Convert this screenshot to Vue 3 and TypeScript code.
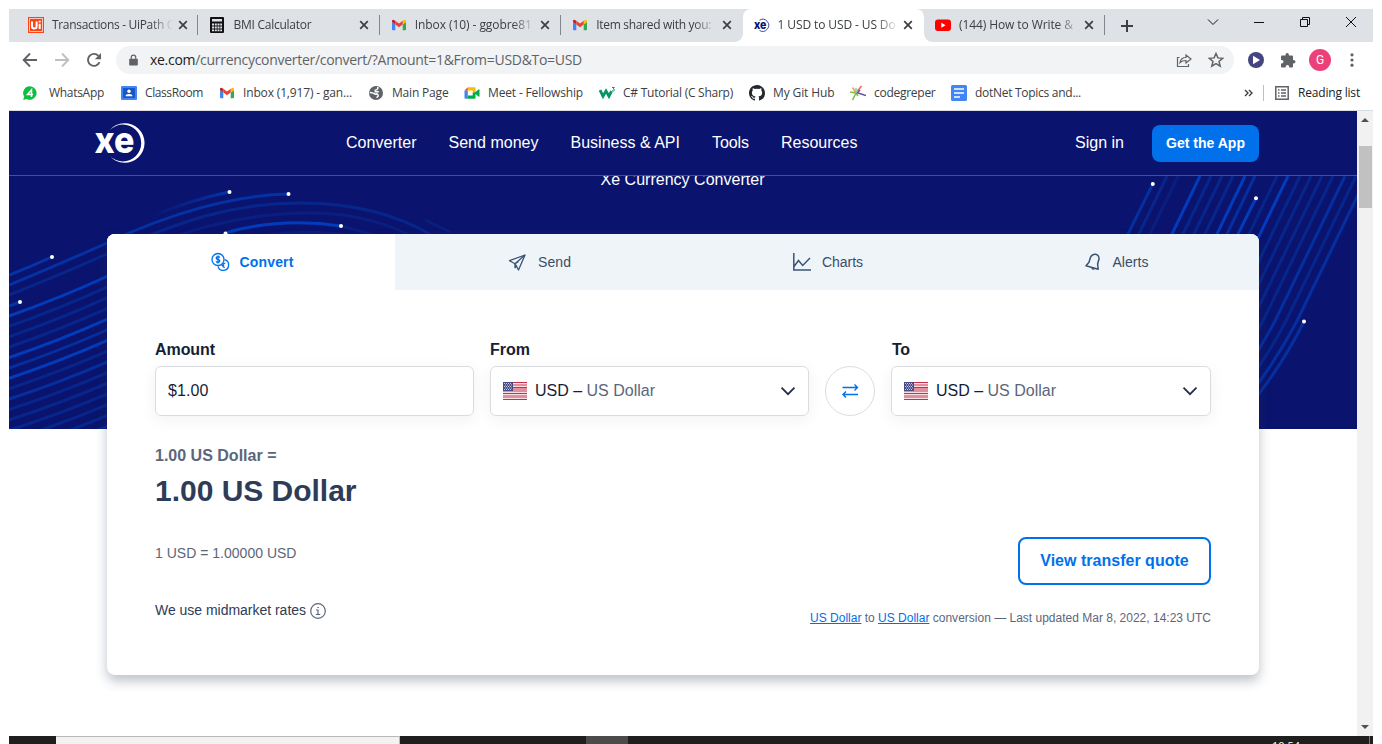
<script setup lang="ts">
import type { Directive } from 'vue'

/* Tracks a label so that it fills the given width. */
const vFit: Directive<HTMLElement, number> = {
  mounted(el, binding) {
    const count = (el.textContent ?? '').trim().length
    const natural = el.getBoundingClientRect().width
    el.style.letterSpacing = `${(binding.value - natural) / count}px`
  },
}

interface Tab { icon: string; title: string; width: number; active?: boolean; sep?: boolean }
const tabs: Tab[] = [
  { icon: 'uipath', title: 'Transactions - UiPath C', width: 122, sep: true },
  { icon: 'calc', title: 'BMI Calculator', width: 78, sep: true },
  { icon: 'gmail', title: 'Inbox (10) - ggobre81', width: 117, sep: true },
  { icon: 'gmail', title: 'Item shared with you:', width: 115 },
  { icon: 'xe', title: '1 USD to USD - US Do', width: 118, active: true },
  { icon: 'youtube', title: '(144) How to Write &', width: 114, sep: true },
]

const bookmarks = [
  { icon: 'whatsapp', title: 'WhatsApp', width: 55 },
  { icon: 'classroom', title: 'ClassRoom', width: 58 },
  { icon: 'gmail', title: 'Inbox (1,917) - gan...', width: 109 },
  { icon: 'globe', title: 'Main Page', width: 56.5 },
  { icon: 'meet', title: 'Meet - Fellowship', width: 95 },
  { icon: 'w3', title: 'C# Tutorial (C Sharp)', width: 110 },
  { icon: 'github', title: 'My Git Hub', width: 61.5 },
  { icon: 'grepper', title: 'codegreper', width: 61.5 },
  { icon: 'docs', title: 'dotNet Topics and...', width: 106 },
]

const nav = [
  { label: 'Converter', width: 70.5 },
  { label: 'Send money', width: 90 },
  { label: 'Business & API', width: 109.5 },
  { label: 'Tools', width: 37 },
  { label: 'Resources', width: 76.5 },
]

const modes = [
  { id: 'convert', label: 'Convert', width: 54 },
  { id: 'send', label: 'Send', width: 33 },
  { id: 'charts', label: 'Charts', width: 41 },
  { id: 'alerts', label: 'Alerts', width: 36 },
]

/* Stroke tones of the hero curves, from faint to bright. */
const tone = ['#0a1e80', '#07268c', '#052f9f', '#023cba']

const leftTones = [3, 1, 1, 1, 3, 2, 3, 1, 2, 1, 1, 1, 1, 1, 1]
const leftLines = leftTones.map((t, i) => {
  const a = 316 + i * 10.4
  const b = 276 + i * 10.7
  return { d: `M9 ${a} Q60 ${(a + b) / 2 + 2} 108 ${b}`, color: tone[t] }
})

const rightLines = [
  [1167, 1], [1178, 0], [1200, 3], [1211, 1], [1222, 1], [1233, 1], [1245, 3], [1255, 2],
  [1277, 1], [1288, 3], [1300, 1], [1311, 1], [1322, 1], [1333, 1], [1345, 2], [1356, 1], [1367, 2],
].map(([x, t]) => ({ d: `M${x} 176 L${x - 70} 321 Q${x - 100} 378 ${x - 145} 429`, color: tone[t] }))

const dots = [
  [229.5, 192], [288.5, 194], [341, 226], [225.5, 233.5], [52, 257], [20, 302],
  [1152.8, 184], [1256, 198.3], [1304, 321.5],
]
</script>

<template>
  <div class="screen">
    <svg class="defs" width="0" height="0">
      <symbol id="i-uipath" viewBox="0 0 16 16"><path fill="#fa4616" d="M0 0h16v16H0z" /><path fill="none" stroke="#fff" stroke-width=".7" d="M1.5 1.5h13v13h-13z" /><path fill="none" stroke="#fff" stroke-width="2" d="M4 4.5v4.8q0 2.2 2.3 2.2t2.3-2.2V4.5M11.7 6.8v5.2M11.7 3.8v1.7" /></symbol>
      <symbol id="i-calc" viewBox="0 0 16 16"><path fill="#111" d="M2 0h12q1 0 1 1v14q0 1-1 1H2q-1 0-1-1V1q0-1 1-1z" /><path fill="#dee1e6" d="M3 2h10v2.5H3zM3 6.5h2v2H3zM5.8 6.5h2v2h-2zM8.5 6.5h2v2h-2zM11.2 6.5h1.8v2h-1.8zM3 9.5h2v2H3zM5.8 9.5h2v2h-2zM8.5 9.5h2v2h-2zM11.2 9.5h1.8v2h-1.8zM3 12.5h2v1.7H3zM5.8 12.5h2v1.7h-2zM8.5 12.5h2v1.7h-2zM11.2 12.5h1.8v1.7h-1.8z" /></symbol>
      <symbol id="i-gmail" viewBox="0 0 16 16"><path fill="#4285f4" d="M1 5l3.3 2.4V13.300H2q-1 0-1-1z" /><path fill="#34a853" d="M15 5l-3.300 2.400V13.300H14q1 0 1-1z" /><path fill="#fbbc04" d="M11.700 3.700L13.200 2.900q1.800-.5 1.800 1.300V5l-3.300 2.500z" /><path fill="#c5221f" d="M4.300 3.700L2.800 2.900Q1 2.400 1 4.200V5l3.300 2.500z" /><path fill="#ea4335" d="M4.300 3.700L8 6.500l3.700-2.800v3.800L8 10.300 4.300 7.500z" /></symbol>
      <symbol id="i-xe" viewBox="0 0 16 16"><text x="0" y="12" font-family="Inter, sans-serif" font-weight="800" font-size="12" textLength="12.500" lengthAdjust="spacingAndGlyphs" fill="#0a146e">xe</text><path fill="none" stroke="#3c4490" stroke-width="1" d="M5.500 3.200A6 6 0 1 1 5.500 13.400" /></symbol>
      <symbol id="i-youtube" viewBox="0 0 16 16"><rect y="2.500" width="16" height="11.500" rx="3" fill="#f00" /><path fill="#fff" d="M6.300 5.700v5l4.300-2.500z" /></symbol>
      <symbol id="i-whatsapp" viewBox="0 0 16 16"><path fill="#0cbf3e" d="M8 1.300a6.700 6.700 0 1 1-3.300 12.600L1.200 15l1-3.400A6.700 6.700 0 0 1 8 1.300z" /><path fill="none" stroke="#fff" stroke-width="1.500" d="M9.500 12V4.800L5.500 9.500h5.500" /></symbol>
      <symbol id="i-classroom" viewBox="0 0 16 16"><rect y="1" width="16" height="14" rx="1" fill="#4285f4" /><path fill="#1a56c4" d="M2 3h12v10H2z" /><circle cx="8" cy="6.300" r="1.700" fill="#fff" /><path fill="#fff" d="M4.500 11.300q0-2.300 3.500-2.300t3.500 2.300z" /></symbol>
      <symbol id="i-globe" viewBox="0 0 16 16"><circle cx="8" cy="8" r="7" fill="#5f6368" /><path fill="none" stroke="#fff" stroke-width="1.500" d="M1.800 7.500q3 .2 4.200 1 1.700 1 2.500.500t1.500 1-1.500 2.500M9.800 2v1.500Q9 5 7.300 5.200v1.600h3.500" /></symbol>
      <symbol id="i-meet" viewBox="0 0 16 16"><path fill="#4285f4" d="M.5 5.500h3.300v8.300H1.500q-1 0-1-1z" /><path fill="#ea4335" d="M.5 5.500l3.300-3.300v3.300z" /><path fill="#fbbc04" d="M3.800 2.200h6.700q1 0 1 1V7L8.700 8.500v-3H3.800z" /><path fill="#00ac47" d="M3.800 10.600h4.900V8l2.800-1 3-2.500q1-.5 1 .5v6q0 1-1 .5l-3-2.500v3.800q0 1-1 1H3.800z" /></symbol>
      <symbol id="i-w3" viewBox="0 0 16 16"><path fill="none" stroke="#059862" stroke-width="2.800" d="M1 5l3 6.200 3-5.200 3 5.200 2.500-5" /><path fill="none" stroke="#059862" stroke-width="1" d="M13 2.500h2.400l-1.200 1.400q1.500.2 1.200 1.400-.7 1.200-2.400.4" /></symbol>
      <symbol id="i-github" viewBox="0 0 16 16"><path fill="#24292f" d="M8 0C3.580 0 0 3.580 0 8c0 3.540 2.290 6.530 5.470 7.590.4.070.55-.17.55-.38v-1.500c-2.010.37-2.530-.49-2.690-.94-.09-.23-.48-.94-.82-1.130-.28-.15-.68-.52-.01-.53.63-.01 1.080.58 1.230.82.720 1.210 1.870.87 2.330.66.070-.52.280-.87.510-1.070-1.780-.2-3.640-.89-3.640-3.950 0-.87.310-1.590.82-2.150-.08-.2-.36-1.020.08-2.120 0 0 .67-.21 2.200.82a7.400 7.400 0 0 1 4 0c1.530-1.040 2.200-.82 2.200-.82.440 1.100.160 1.920.080 2.120.51.560.820 1.270.820 2.150 0 3.070-1.870 3.750-3.650 3.950.290.250.540.730.540 1.480v2.200c0 .21.150.46.550.38A8 8 0 0 0 16 8c0-4.420-3.580-8-8-8z" /></symbol>
      <symbol id="i-grepper" viewBox="0 0 16 16"><g fill="none" stroke-width="1.600"><path stroke="#7ac143" d="M6 8L0 7M6 8l-3.500 7M6 8l2 3" /><path stroke="#f6a04d" d="M6 8L2.500 2.500" /><path stroke="#f06a5a" d="M7.500 6l4-5" /><path stroke="#6a4fa3" d="M5 7l11 3.500M7 8l3-3" /><path stroke="#8ed0a0" d="M6 8V3" /></g></symbol>
      <symbol id="i-docs" viewBox="0 0 16 16"><rect width="16" height="16" rx="1.500" fill="#4285f4" /><path stroke="#fff" stroke-width="1.700" d="M3 4h10M3 8h10M3 12h6" /></symbol>

      <symbol id="i-convert" viewBox="0 0 20 20"><g fill="none" stroke="#0071eb" stroke-width="1.300"><circle cx="8" cy="7.500" r="6" /><path d="M14.500 7.700a5.400 5.400 0 1 1-6.500 6.600" /><path d="M9.900 5.600Q9.300 4.600 8 4.600 6.200 4.700 6.200 6t1.800 1.500T9.800 9 8 10.400q-1.400 0-2-1M8 3.400v8.200M15.300 11.300q-2.200-.2-2.500 1.700-.1 2.300 2 2.300M11.400 13.300h2.800" /></g></symbol>
      <symbol id="i-send" viewBox="0 0 20 20"><g fill="none" stroke="#3b5275" stroke-width="1.300" stroke-linejoin="round"><path d="M17 3L1.500 8.700l5.500 3L10.500 18z" /><path d="M17 3L7 11.700v4L9 13.500M7.500 11.500l3-2" /></g></symbol>
      <symbol id="i-charts" viewBox="0 0 20 20"><path fill="none" stroke="#3b5275" stroke-width="1.500" d="M1.800 1v17H19M2 14.500l4.500-6 4.200 5L18 6" /></symbol>
      <symbol id="i-alerts" viewBox="0 0 20 20"><g fill="none" stroke="#3b5275" stroke-width="1.500" stroke-linejoin="round"><path d="M3 13.800L6 10.300l1.500-5Q9 1.700 12.700 2.300q3.700.9 3.300 4.700l-1.400 5 .6 5.300z" /><path d="M9 15.800q.4 1.900 2.600.8" /></g></symbol>
      <symbol id="i-flag" viewBox="0 0 24 18"><rect width="24" height="18" rx="1.500" fill="#e58e9b" /><path fill="#c3324a" d="M0 0h24v1H0zM10 5h14v1H10zM0 11h24v1H0zM0 17h24v1H0z" /><path fill="#f8dfe3" d="M10 1h14v1H10zM10 4h14v1H10zM0 10h24v1H0zM0 12h24v1H0zM0 16h24v1H0z" /><path fill="#464a86" d="M0 0h10v9H0z" /><path stroke="#c9cbe0" stroke-width="1" stroke-dasharray="1 1" d="M1 1.500h8M2 3h7M1 4.500h8M2 6h7M1 7.500h8" /></symbol>
    </svg>

    <div class="window">
      <header class="tabstrip">
        <div v-for="(t, i) in tabs" :key="i" class="tab" :class="{ active: t.active, sep: t.sep }">
          <svg class="i16"><use :href="'#i-' + t.icon" /></svg>
          <div class="tab-title"><span v-fit="t.width" class="txt">{{ t.title }}</span></div>
          <svg class="close" viewBox="0 0 10 10"><path d="M1.200 1.200l7.600 7.600M8.800 1.200L1.200 8.800" /></svg>
        </div>
        <svg class="plus" viewBox="0 0 14 14"><path d="M7 1v12M1 7h12" /></svg>
        <div class="controls">
          <svg viewBox="0 0 12 12"><path d="M1 3.500l5 5 5-5" /></svg>
          <svg viewBox="0 0 12 12"><path d="M1 6.500h10" /></svg>
          <svg viewBox="0 0 12 12"><path d="M1.500 3.500h7v7h-7zM3.500 3.500v-2h7v7h-2" /></svg>
          <svg viewBox="0 0 12 12"><path d="M1 1l10 10M11 1L1 11" /></svg>
        </div>
      </header>

      <div class="toolbar">
        <svg class="nav-i" viewBox="0 0 16 16"><path d="M15 8H2M8 1.500L1.700 8 8 14.500" /></svg>
        <svg class="nav-i off" viewBox="0 0 16 16"><path d="M1 8h13M8 1.500L14.300 8 8 14.500" /></svg>
        <svg class="nav-i" viewBox="0 0 16 16"><path d="M13.500 10.200A6 6 0 1 1 12.400 3.800" /><path class="solid" d="M15 1v6.200H8.800z" /></svg>
        <div class="omnibox">
          <svg class="lock" viewBox="0 0 10 14"><path fill="#5f6368" d="M1 5h8q.8 0 .8.8v6q0 .8-.8.8H1q-.8 0-.8-.8v-6Q.2 5 1 5z" /><path fill="none" stroke="#5f6368" stroke-width="1.300" d="M2.500 5.500V3.500q0-2.400 2.500-2.400t2.500 2.400v2" /></svg>
          <span v-fit="432" class="txt url"><b>xe.com</b>/currencyconverter/convert/?Amount=1&amp;From=USD&amp;To=USD</span>
          <svg class="box-i" viewBox="0 0 16 16"><path d="M3.500 5.500h-2v9h11V12M4 10.500q1-5 6-5V3l5 4-5 4V8.500q-4 0-6 2z" /></svg>
          <svg class="box-i star" viewBox="0 0 16 16"><path d="M8 1.500l1.900 4.400 4.800.4-3.700 3.100 1.200 4.700L8 11.600l-4.200 2.500L5 9.400 1.300 6.300l4.800-.4z" /></svg>
        </div>
        <div class="extensions">
          <svg class="i16" viewBox="0 0 16 16"><circle cx="8" cy="8" r="8" fill="#45457f" /><path fill="#fff" d="M5 3.800v8.400L12 8z" /></svg>
          <svg class="i16" viewBox="0 0 16 16"><path fill="#5f6368" d="M1 4.500q0-1 1-1h3.500V3q0-2 1.700-2t1.700 2v.5H12q1 0 1 1V8h.5q2 0 2 1.700t-2 1.800H13v3q0 1-1 1H9.200V15q0-2-1.800-2t-1.800 2v.5H2q-1 0-1-1v-3h.7q1.800 0 1.800-1.700T1.700 8H1z" /></svg>
          <span class="avatar">G</span>
          <svg class="i16" viewBox="0 0 16 16" fill="#5f6368"><circle cx="8" cy="2.800" r="1.600" /><circle cx="8" cy="8" r="1.600" /><circle cx="8" cy="13.200" r="1.600" /></svg>
        </div>
      </div>

      <div class="bookmarks">
        <div v-for="b in bookmarks" :key="b.title" class="bookmark">
          <svg class="i16"><use :href="'#i-' + b.icon" /></svg>
          <span v-fit="b.width" class="txt">{{ b.title }}</span>
        </div>
        <div class="reading">
          <svg class="more" viewBox="0 0 10 8"><path d="M1 1l3 3-3 3M5 1l3 3-3 3" /></svg>
          <i class="bar"></i>
          <svg class="list" viewBox="0 0 14 14"><path d="M.8.800h12.400v12.400H.8zM3 4h1.500M6 4h5M3 7h1.500M6 7h5M3 10h1.500M6 10h5" /></svg>
          <span v-fit="62" class="txt">Reading list</span>
        </div>
      </div>

      <div class="viewport">
        <main class="page">
          <nav class="site-nav">
            <svg class="logo" viewBox="94 122 52 42"><text x="94.500" y="153" font-family="Inter, sans-serif" font-weight="800" font-size="37" textLength="40" lengthAdjust="spacingAndGlyphs" fill="#fff">xe</text><path fill="#fff" d="M110 129.800A19.800 19.800 0 1 1 110 156.200 A18.400 18.400 0 1 0 110 129.800z" /></svg>
            <div class="links"><a v-for="n in nav" :key="n.label"><span v-fit="n.width" class="txt">{{ n.label }}</span></a></div>
            <a class="signin"><span v-fit="49" class="txt">Sign in</span></a>
            <button class="get-app"><span v-fit="79" class="txt">Get the App</span></button>
          </nav>

          <section class="hero">
            <svg class="curves" viewBox="9 176 1348 253">
              <defs>
                <linearGradient id="fade" x1="0" x2="1"><stop offset="0" stop-color="#0a146e" /><stop offset="1" stop-color="#0434a8" /></linearGradient>
              </defs>
              <g fill="none" stroke-width="3">
                <path stroke="url(#fade)" d="M150 217Q190 200 229 192" />
                <path stroke="#0432a4" d="M9 285Q60 264 107 243C170 213 235 195 288 194" />
                <path stroke="#07268c" d="M9 295Q60 275 107 254C180 220 235 203 300 203C350 203 395 213 433 236" />
                <path stroke="#0a1e80" d="M107 265C180 230 240 213 310 213C350 213 380 221 412 236" />
                <path stroke="#023cba" d="M225 233Q280 217 341 226" />
                <path stroke="#0a1e80" d="M341 226L385 238M268 235Q310 229 355 236M425 220L450 232" />
                <path stroke="#0434a8" d="M9 275Q30 267 52 257M9 306L20 302" />
                <path v-for="(l, i) in leftLines" :key="'l' + i" :stroke="l.color" :d="l.d" />
                <path v-for="(l, i) in rightLines" :key="'r' + i" :stroke="l.color" :d="l.d" />
                <path stroke="#052f9f" d="M1152.800 184L1125 240M1304 321.500Q1280 370 1240 418" />
                <path stroke="#023cba" d="M1256 198L1236 238" />
              </g>
              <circle v-for="(d, i) in dots" :key="'d' + i" :cx="d[0]" :cy="d[1]" r="2" fill="#fff" />
            </svg>
            <h1><span v-fit="164" class="txt">Xe Currency Converter</span></h1>
          </section>

          <section class="card">
            <div class="modes">
              <div v-for="m in modes" :key="m.id" class="mode" :class="m.id">
                <svg class="i20"><use :href="'#i-' + m.id" /></svg>
                <span v-fit="m.width" class="txt">{{ m.label }}</span>
              </div>
            </div>
            <div class="body">
              <div class="fields">
                <div class="field">
                  <label><span v-fit="60" class="txt">Amount</span></label>
                  <div class="box"><span v-fit="40.500" class="txt">$1.00</span></div>
                </div>
                <div class="field">
                  <label><span v-fit="40" class="txt">From</span></label>
                  <div class="box">
                    <svg class="flag"><use href="#i-flag" /></svg>
                    <span v-fit="120" class="txt">USD – <em>US Dollar</em></span>
                    <svg class="chev" viewBox="0 0 16 10"><path d="M1.500 1.700l6.500 6.500 6.500-6.500" /></svg>
                  </div>
                </div>
                <button class="swap"><svg viewBox="0 0 18 16"><path d="M1.500 4.500h15M13.500 1.500l3 3-3 3M17 11.500H2M5 8.500l-3 3 3 3" /></svg></button>
                <div class="field">
                  <label><span v-fit="17.500" class="txt">To</span></label>
                  <div class="box">
                    <svg class="flag"><use href="#i-flag" /></svg>
                    <span v-fit="120" class="txt">USD – <em>US Dollar</em></span>
                    <svg class="chev" viewBox="0 0 16 10"><path d="M1.500 1.700l6.500 6.500 6.500-6.500" /></svg>
                  </div>
                </div>
              </div>
              <div class="result">
                <div class="left">
                  <p class="base"><span v-fit="121.500" class="txt">1.00 US Dollar =</span></p>
                  <p class="amount"><span v-fit="201.500" class="txt">1.00 US Dollar</span></p>
                  <p class="unit"><span v-fit="141.500" class="txt">1 USD = 1.00000 USD</span></p>
                  <p class="mid"><span v-fit="151" class="txt">We use midmarket rates</span>
                    <svg class="info" viewBox="0 0 16 16"><circle cx="8" cy="8" r="7.300" /><path d="M6 7h2v4.500M5.800 11.500h4.500M7.300 4.500h1.500" /></svg>
                  </p>
                </div>
                <div class="right">
                  <button class="quote"><span v-fit="148.500" class="txt">View transfer quote</span></button>
                  <p class="updated"><span v-fit="401" class="txt"><a>US Dollar</a> to <a>US Dollar</a> conversion — Last updated Mar 8, 2022, 14:23 UTC</span></p>
                </div>
              </div>
            </div>
          </section>
        </main>
        <aside class="scrollbar">
          <svg viewBox="0 0 8 4"><path d="M0 4l4-4 4 4z" /></svg>
          <i class="thumb"></i>
          <svg viewBox="0 0 8 4"><path d="M0 0l4 4 4-4z" /></svg>
        </aside>
      </div>

      <footer class="taskbar">
        <i class="start"></i><i class="search"></i><i class="gap"></i><i class="running"></i>
        <span class="clock">10:54</span><i class="peek"></i>
      </footer>
    </div>
  </div>
</template>

<style>
html, body { margin: 0; background: #fff; overflow: hidden; }
</style>

<style scoped>
.screen { width: 1382px; height: 744px; overflow: hidden; background: #fff; box-sizing: border-box; padding: 9px 9px 0; font-family: "Liberation Sans", Arial, sans-serif; }
.screen * { box-sizing: border-box; }
.defs { position: absolute; }
.window { width: 1364px; height: 735px; display: flex; flex-direction: column; overflow: hidden; }
.txt { display: inline-block; white-space: nowrap; flex: none; }
.i16 { width: 16px; height: 16px; flex: none; overflow: visible; }
.i20 { width: 20px; height: 20px; flex: none; }
button { padding: 0; font-family: inherit; }

.tabstrip { height: 33px; flex: none; background: #dee1e6; display: flex; align-items: center; padding-left: 8px; font: 12px/31px "Open Sans", sans-serif; color: #3c4043; }
.tab { width: 181.400px; height: 33px; flex: none; display: flex; align-items: center; padding-left: 11px; padding-bottom: 1px; position: relative; }
.tab.sep::after { content: ""; width: 1px; height: 20px; background: #80868b; position: absolute; right: 0; top: 6px; }
.tab.active { background: #fff; border-radius: 8px 8px 0 0; }
.tab.active::before, .tab.active::after { content: ""; position: absolute; bottom: 0; width: 8px; height: 8px; }
.tab.active::before { left: -8px; background: radial-gradient(circle at 0 0, #dee1e6 7.500px, #fff 8px); }
.tab.active::after { right: -8px; background: radial-gradient(circle at 100% 0, #dee1e6 7.500px, #fff 8px); }
.tab-title { width: 121px; height: 32px; margin-left: 8px; overflow: hidden; -webkit-mask-image: linear-gradient(90deg, #000 98px, transparent 121px); mask-image: linear-gradient(90deg, #000 98px, transparent 121px); }
.close { width: 10px; height: 10px; margin-left: 4.500px; fill: none; stroke: #3c4043; stroke-width: 1.700; }
.plus { width: 14px; height: 14px; margin-left: 15px; fill: none; stroke: #3c4043; stroke-width: 2; flex: none; }
.controls { display: flex; gap: 34px; margin-left: auto; padding-right: 16px; height: 26px; align-items: center; align-self: flex-start; }
.controls svg { width: 12px; height: 12px; fill: none; stroke: #111; stroke-width: 1; }

.toolbar { height: 36px; flex: none; display: flex; align-items: center; padding: 0 12px 0 13px; }
.nav-i { width: 16px; height: 16px; margin-right: 16px; fill: none; stroke: #5f6368; stroke-width: 1.900; flex: none; }
.nav-i.off { stroke: #bdc1c6; }
.nav-i .solid { fill: #5f6368; stroke: none; }
.omnibox { width: 1118px; height: 28px; margin-left: -2px; background: #f1f3f4; border-radius: 14px; display: flex; align-items: center; flex: none; padding: 0 10px 0 13px; font: 14px/28px "Open Sans", sans-serif; color: #5f6368; }
.lock { width: 9px; height: 13px; margin-right: 12px; }
.url b { font-weight: 400; color: #202124; }
.box-i { width: 16px; height: 16px; margin-left: auto; fill: none; stroke: #5f6368; stroke-width: 1.200; }
.star { margin-left: 16px; stroke-width: 1.500; }
.extensions { display: flex; align-items: center; margin-left: 14px; gap: 16px; }
.avatar { width: 22px; height: 22px; margin: 0 -3px; border-radius: 50%; background: #ec407a; color: #fff; font: 12px/22px Roboto, sans-serif; text-align: center; }

.bookmarks { height: 33px; flex: none; display: grid; grid-template-columns: 99px 98px 149px 96px 135px 150px 101px 101px 1fr auto; align-items: center; padding: 0 13px 3px 13px; border-bottom: 1px solid #dadce0; font: 12px/28px "Open Sans", sans-serif; color: #3c4043; }
.bookmark { display: flex; align-items: center; gap: 8px; }
.bookmark:first-child { gap: 11px; }
.reading { display: flex; align-items: center; }
.more { width: 10px; height: 8px; margin-right: 9px; fill: none; stroke: #3c4043; stroke-width: 1.400; }
.bar { width: 1px; height: 16px; background: #bdc1c6; margin-right: 11px; }
.list { width: 14px; height: 14px; margin-right: 9px; fill: none; stroke: #5f6368; stroke-width: 1.500; }
.reading .txt { color: #202124; }

.viewport { height: 625px; flex: none; display: flex; }
.page { width: 1348px; height: 625px; overflow: hidden; }
.site-nav { height: 65px; background: #0a146e; border-bottom: 1px solid #474f92; display: flex; align-items: center; padding-left: 85px; color: #fff; font-size: 16px; line-height: 20px; position: relative; }
.logo { width: 52px; height: 42px; flex: none; overflow: visible; }
.links { display: flex; gap: 32px; margin-left: 200px; width: 713px; padding-bottom: 1px; }
.signin { width: 93px; margin-left: 16px; padding-bottom: 1px; }
.get-app { width: 107px; height: 37px; margin-left: -16px; border: 0; border-radius: 8px; background: #0071eb; color: #fff; font-size: 14px; font-weight: 700; }
.hero { height: 253px; background: #0a146e; display: flex; justify-content: center; overflow: hidden; position: relative; }
.curves { position: absolute; inset: 0; width: 1348px; height: 253px; }
h1 { margin: -7px 1px 0 0; color: #fff; font-size: 16px; font-weight: 400; line-height: 22px; height: 22px; position: relative; }

.card { width: 1152px; height: 441px; margin: -195px 0 0 98px; background: #fff; border-radius: 8px; position: relative; box-shadow: 0 6px 12px rgba(35, 55, 80, .3); }
.modes { display: grid; grid-template-columns: repeat(4, 288px); height: 56px; border-radius: 8px 8px 0 0; overflow: hidden; background: #eef4f8; font-size: 14px; color: #3b4c69; }
.mode { display: flex; align-items: center; justify-content: center; gap: 10px; padding-left: 1px; }
.mode.convert { background: #fff; color: #0071eb; font-weight: 700; }
.body { padding: 48px 48px 0; }
.fields { display: flex; align-items: flex-end; gap: 16px; color: #141e37; font-size: 16px; }
.field { width: 319px; flex: none; }
.field:last-child { width: 320px; }
label { display: block; font-weight: 700; line-height: 22px; height: 28px; padding-top: 1px; }
.field:last-child label { padding-left: 1px; }
.box { height: 50px; border: 1px solid #dadddf; border-radius: 6px; display: flex; align-items: center; padding: 0 12px; box-shadow: 0 4px 16px rgba(40, 40, 40, .06); }
.box .txt { line-height: 20px; margin-bottom: 1px; }
.box em { font-style: normal; color: #5c667b; }
.flag { width: 24px; height: 18px; margin-right: 8px; }
.chev { width: 16px; height: 10px; margin-left: auto; fill: none; stroke: #222c49; stroke-width: 1.700; }
.swap { width: 50px; height: 50px; border: 1px solid #dadddf; border-radius: 50%; background: #fff; display: grid; place-items: center; flex: none; }
.swap svg { width: 18px; height: 16px; fill: none; stroke: #0071eb; stroke-width: 1.400; }
.result { display: flex; justify-content: space-between; }
p { margin: 0; }
.base { margin-top: 30px; font-size: 16px; font-weight: 700; line-height: 20px; color: #5c667b; }
.amount { font-size: 30px; font-weight: 700; line-height: 40px; margin-top: 5px; color: #2e3c57; }
.unit { font-size: 14px; line-height: 20px; margin-top: 32px; color: #5c667b; }
.mid { font-size: 14px; line-height: 20px; margin-top: 37px; color: #2e3c57; display: flex; align-items: center; gap: 4px; }
.info { width: 16px; height: 16px; fill: none; stroke: #5c667b; stroke-width: 1.200; margin-top: 1px; }
.right { padding-top: 121px; text-align: right; }
.quote { width: 193px; height: 48px; border: 2px solid #0071eb; border-radius: 8px; background: #fff; color: #0071eb; font-size: 16px; font-weight: 700; }
.updated { font-size: 12px; line-height: 20px; margin-top: 23px; color: #5c667b; }
.updated a { color: #006ee6; text-decoration: underline; }

.scrollbar { width: 16px; background: #f1f1f1; display: flex; flex-direction: column; align-items: center; padding: 7px 0 7px; }
.scrollbar svg { width: 8px; height: 4px; fill: #505050; }
.scrollbar svg:last-child { margin-top: auto; }
.thumb { width: 13px; height: 62px; background: #c1c1c1; margin-top: 24px; margin-left: 1px; }

.taskbar { height: 8px; flex: none; background: #1f1f1f; display: flex; overflow: hidden; }
.start { width: 47px; }
.search { width: 344px; background: #f2f2f2; border-top: 1px solid #b8b8b8; border-right: 1px solid #b8b8b8; }
.gap { width: 186px; }
.running { width: 42px; background: #4b4b4b; }
.clock { margin-left: 644px; width: 28px; color: #fff; font: 11px/14px "Open Sans", sans-serif; padding-top: 3px; }
.peek { width: 1px; background: #777; margin-left: 69px; }
</style>
